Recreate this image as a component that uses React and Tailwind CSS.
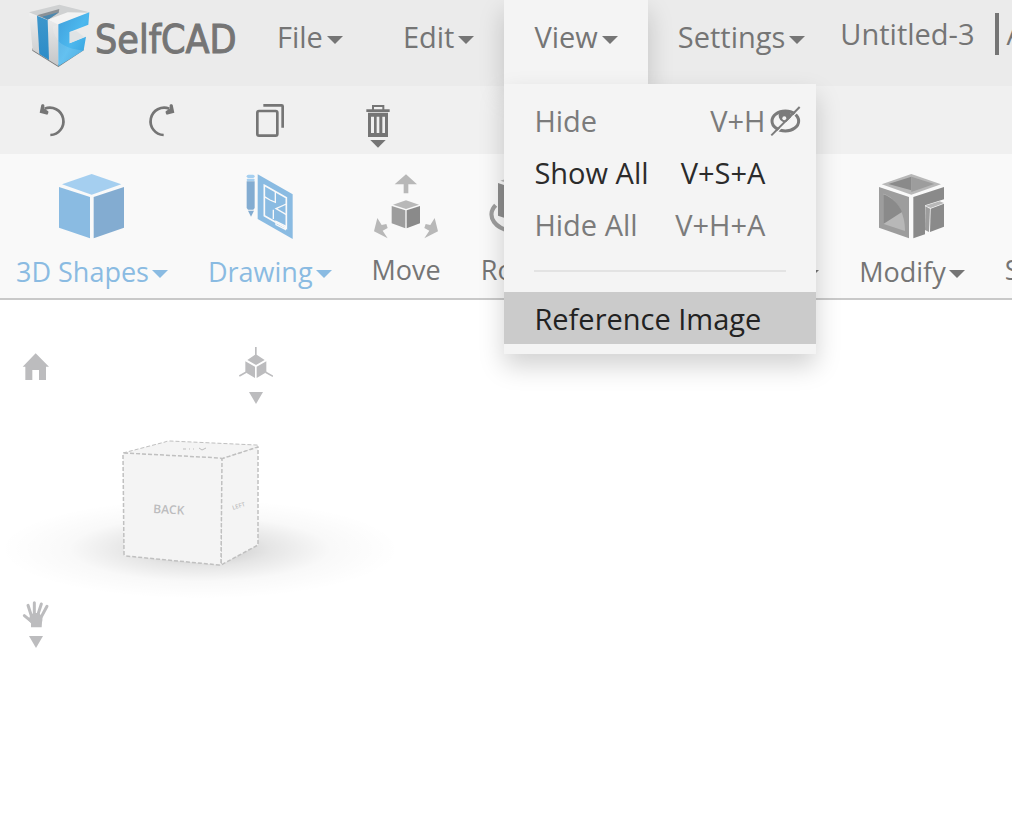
import { useState } from "react";

const ribbonItems = [
  { name: "3D Shapes", icon: ShapesIcon, caret: true, active: true },
  { name: "Drawing", icon: DrawingIcon, caret: true, active: true },
  { name: "Move", icon: MoveIcon },
  { name: "Rotate", icon: RotateIcon },
  { name: "Scale", icon: SolidIcon },
  { name: "Render", icon: SolidIcon, caret: true },
  { name: "Modify", icon: ModifyIcon, caret: true },
  { name: "Simulation", icon: SolidIcon },
];

const viewItems = [
  { name: "Hide", keys: "V+H", disabled: true, icon: true },
  { name: "Show All", keys: "V+S+A" },
  { name: "Hide All", keys: "V+H+A", disabled: true },
];

function Caret() {
  return (
    <svg viewBox="0 0 16 8" className="w-4 h-2 shrink-0" fill="currentColor">
      <path d="M0 0h16L8 8z" />
    </svg>
  );
}

function LogoIcon() {
  return (
    <svg viewBox="84 12 186 192" className="w-[62px] h-16 shrink-0">
      <defs>
        <linearGradient id="blue" x1="0" y1="0" x2="1" y2="1">
          <stop offset="0" stopColor="#3f9fdb" />
          <stop offset="0.5" stopColor="#4db8ee" />
          <stop offset="1" stopColor="#2f9bd8" />
        </linearGradient>
        <linearGradient id="stripe" x1="0" y1="0" x2="0" y2="1">
          <stop offset="0" stopColor="#3f97cc" />
          <stop offset="1" stopColor="#2c8cc8" />
        </linearGradient>
        <linearGradient id="silver" x1="0" y1="0" x2="0" y2="1">
          <stop offset="0" stopColor="#f0f0f0" />
          <stop offset="1" stopColor="#c4c6c8" />
        </linearGradient>
      </defs>
      <path d="M97 152l78 49 76-50-2-6-74 48-78-48z" fill="#777" />
      <path d="M87 37l88 35v126l-77-48z" fill="url(#silver)" />
      <path d="M87 37l91-23 90 23-93 36z" fill="#cfd1d2" />
      <path d="M111 46l67-19-2 11-32 21z" fill="#8b9196" />
      <path d="M126 50l50-13-32 22z" fill="#4a88b0" />
      <path d="M143 59l60-22 65 1-93 36z" fill="#f3f3f3" />
      <path d="M111 47l32 13 4 120-29-18z" fill="url(#stripe)" />
      <path d="M175 73l93-36-3 37-56 22v34l49-20-7 41-76 48z" fill="url(#blue)" />
      <path d="M209 96l20-3 24 18-44 19z" fill="#dfe3e5" />
      <path d="M158 80c6 38 20 62 93 72l-76 46V73z" fill="#fff" opacity="0.13" />
    </svg>
  );
}

function ShapesIcon() {
  return (
    <svg viewBox="177 56 198 198" className="size-[66px]">
      <path d="M275 56l89 31-89 31-89-31z" fill="#a5cff0" />
      <path d="M177 95l93 30v124l-93-32z" fill="#8abbe2" />
      <path d="M281 125l91-30v122l-91 32z" fill="#83acd1" />
    </svg>
  );
}

function DrawingIcon() {
  return (
    <svg viewBox="709 56 198 198" className="size-[66px]">
      <path d="M738 78h24v80l-4 5h-16l-4-5z" fill="#83acd1" />
      <path d="M742 166h18l-9 18z" fill="#83acd1" />
      <rect x="738" y="58" width="24" height="10" rx="5" fill="#a5cff0" />
      <rect x="738" y="70" width="24" height="7" rx="3" fill="#a5cff0" />
      <path d="M771 57l105 60v134l-105-60z" fill="#8abbe2" />
      <g fill="none" stroke="#f9f9f9" strokeWidth="5">
        <path d="M791 90l66 37v92l-66-38z" />
        <path d="M791 124l17 10 16 7v-32M857 178l-31-18 31-14M818 163v28M826 198v10l28 14v-10z" strokeWidth="4" />
      </g>
    </svg>
  );
}

function MoveIcon() {
  return (
    <svg viewBox="97 56 198 198" className="size-[66px]">
      <g fill="#b8b8b8">
        <path d="M196 57l33 30h-26v27h-14V87h-27z" />
        <path d="M196 135l39 13-39 13-39-13z" />
        <path d="M110 188l13 21 14-3 4 12-15 8 15 23-41-21z" />
        <path d="M282 188l-13 21-14-3-4 12 15 8-15 23 41-21z" />
      </g>
      <path d="M153 152l41 13v54l-41-15z" fill="#9d9d9d" />
      <path d="M198 165l40-13v52l-40 15z" fill="#8a8a8a" />
    </svg>
  );
}

function RotateIcon() {
  return (
    <svg viewBox="444 56 198 198" className="size-[66px]">
      <path d="M540 56l62 20-62 20-62-20z" fill="#b8b8b8" />
      <path d="M471 83l66 22v98l-66-22z" fill="#8d8d8d" />
      <path d="M544 105l64-22v98l-64 22z" fill="#7d7d7d" />
      <path d="M464 150c-28 28-10 78 76 80 60 0 96-24 92-50" fill="none" stroke="#9d9d9d" strokeWidth="13" />
    </svg>
  );
}

function SolidIcon() {
  return (
    <svg viewBox="177 56 198 198" className="size-[66px]">
      <path d="M275 56l89 31-89 31-89-31z" fill="#b8b8b8" />
      <path d="M177 95l93 30v124l-93-32z" fill="#9d9d9d" />
      <path d="M281 125l91-30v122l-91 32z" fill="#8a8a8a" />
    </svg>
  );
}

function ModifyIcon() {
  return (
    <svg viewBox="243 56 198 198" className="size-[66px]">
      <path d="M340 56l89 31-89 31-89-31z" fill="#b8b8b8" />
      <path d="M340 64v41l-69-19z" fill="#8a8a8a" />
      <path d="M340 64l69 22-69 24z" fill="#9d9d9d" />
      <path d="M243 95l90 30v124l-90-32z" fill="#9d9d9d" />
      <path d="M255 115c40 12 66 56 66 112l-66-22z" fill="#b8b8b8" />
      <path d="M256 117c26 9 46 29 56 53l-56 36z" fill="#8a8a8a" />
      <path d="M346 125l92-30v37l-57 18v87l-35 12z" fill="#8a8a8a" />
      <path d="M382 151l43-13 13 5-40 15z" fill="#b8b8b8" />
      <path d="M382 153l14 7-3 70-12-6z" fill="#9d9d9d" />
      <path d="M398 160l40-15v69l-42 16z" fill="#8a8a8a" />
    </svg>
  );
}

function HiddenEyeIcon() {
  return (
    <svg viewBox="810 80 93 93" className="size-[31px]" fill="none" stroke="currentColor">
      <ellipse cx="856" cy="125" rx="40" ry="30" strokeWidth="9" />
      <path d="M840 98a19 19 0 1 0 34 14c0-6-2-11-6-15z" fill="currentColor" stroke="none" />
      <circle cx="853" cy="117" r="6" fill="#f4f4f4" stroke="none" />
      <path d="M902 88l-85 84" stroke="#f4f4f4" strokeWidth="4" />
      <path d="M899 83l-85 85" strokeWidth="6" />
    </svg>
  );
}

function UndoIcon() {
  return (
    <svg viewBox="117 55 84 102" className="w-7 h-[34px]" fill="none" stroke="currentColor">
      <path d="M151 151a41 41 0 1 0-17-79" strokeWidth="8" />
      <path d="M119 84l5-24 5-2 4 3v11l12 8v5l-3 5z" fill="currentColor" stroke="none" />
    </svg>
  );
}

function TrashIcon() {
  return (
    <svg viewBox="1098 57 72 132" className="w-6 h-11" fill="currentColor">
      <path d="M1116 60h37v13h16v8h-70v-8h17zm6 6v7h25v-7z" fillRule="evenodd" />
      <path d="M1104 83h60v73h-60zm9 12v49h9V95zm17 0v49h8V95zm17 0v49h8V95z" fillRule="evenodd" />
      <path d="M1111 165h46l-23 23z" />
    </svg>
  );
}

function ViewCube() {
  return (
    <svg viewBox="0 400 400 200" className="w-[400px] h-[200px]">
      <defs>
        <radialGradient id="floor">
          <stop offset="0" stopColor="#000" stopOpacity="0.24" />
          <stop offset="0.35" stopColor="#000" stopOpacity="0.1" />
          <stop offset="0.65" stopColor="#000" stopOpacity="0.025" />
          <stop offset="1" stopColor="#000" stopOpacity="0" />
        </radialGradient>
      </defs>
      <ellipse cx="200" cy="549" rx="200" ry="50" fill="url(#floor)" />
      <g fill="#f4f4f4" stroke="#c0c0c0" strokeWidth="1.5" strokeDasharray="4 2" strokeLinejoin="round">
        <path d="M123 453l42-11q2-1 5-1l86 4q3 0 2 2l-37 12z" strokeWidth="1" />
        <path d="M221 459l37-12v98l-37 20z" />
        <path d="M124 453l96 5q2 0 2 2l-1 103q0 2-2 2l-93-9q-2 0-2-2l-1-99z" />
      </g>
      <path d="M183 449h3m3 0h1m3 0h1m5-1l3 2 4-2" fill="none" stroke="#bdbdbd" />
      <g fill="#bcbcbe" className="font-['Open_Sans',sans-serif] font-semibold">
        <text x="153" y="513" fontSize="12" transform="rotate(3 153 513)">BACK</text>
        <text x="233" y="510" fontSize="6" transform="rotate(-18 233 510)">LEFT</text>
      </g>
    </svg>
  );
}

function DownTriangle() {
  return (
    <svg viewBox="0 0 14 12" className="w-3.5 h-3" fill="currentColor">
      <path d="M0 0h14L7 12z" />
    </svg>
  );
}

export default function App() {
  const [open, setOpen] = useState("View");

  return (
    <div className="min-h-screen overflow-x-hidden bg-white text-[#757575] font-['Open_Sans',sans-serif] whitespace-nowrap">
      <header className="flex h-[86px] bg-[#ebebeb] text-[29px]">
        <a href="#" className="flex w-[247px] shrink-0 gap-[5px] pl-7 pt-1">
          <LogoIcon />
          <span className="pt-2 text-[39px] leading-[56px] [-webkit-text-stroke:1px_#757575] font-['DejaVu_Sans_Condensed','Open_Sans',sans-serif]">SelfCAD</span>
        </a>
        <nav className="flex h-[84px]">
          {["File", "Edit", "View", "Settings"].map((name) => (
            <div key={name} className={open === name ? "relative z-10 bg-[#f4f4f4] shadow-[0_12px_24px_rgba(0,0,0,0.18)]" : ""}>
              <button
                onClick={() => setOpen(open === name ? "" : name)}
                className="flex h-full items-center gap-1 px-[30px] pb-2.5"
              >
                {name}
                <span className="pt-1.5"><Caret /></span>
              </button>
              {open === name && name === "View" && (
                <div className="absolute left-0 top-full w-[312px] bg-[#f4f4f4] py-2.5 shadow-[0_12px_24px_rgba(0,0,0,0.18)]">
                  {viewItems.map((item) => (
                    <button
                      key={item.name}
                      disabled={item.disabled}
                      className="flex h-[52px] w-full items-center pl-[30px] pr-[15px] pt-0.5 text-[#2b2b2b] disabled:text-[#7b7b7b]"
                    >
                      {item.name}
                      <span className="ml-auto">{item.keys}</span>
                      <span className="flex w-9 justify-end">{item.icon && <HiddenEyeIcon />}</span>
                    </button>
                  ))}
                  <hr className="mx-[30px] my-5 border-t-2 border-[#e3e3e3]" />
                  <button className="flex h-[52px] w-full items-center bg-[#cbcbcb] pl-[30px] pt-0.5 text-[#222]">
                    Reference Image
                  </button>
                </div>
              )}
            </div>
          ))}
        </nav>
        <div className="flex h-[84px] items-center pb-4 pl-[5px]">
          <span className="pr-5">Untitled-3</span>
          <span className="h-[42px] w-1 bg-[#757575]" />
          <a href="#" className="pl-2">Account</a>
        </div>
      </header>

      <div className="flex h-[68px] bg-[#f0f0f0]">
        <button aria-label="Undo" className="flex w-[108px] items-center justify-center pr-0.5">
          <UndoIcon />
        </button>
        <button aria-label="Redo" className="flex w-[108px] items-center justify-center pr-0.5">
          <span className="-scale-x-100"><UndoIcon /></span>
        </button>
        <button aria-label="Copy" className="flex w-[108px] items-center justify-center">
          <svg viewBox="768 55 84 102" className="w-7 h-[34px]" fill="none" stroke="currentColor" strokeWidth="8">
            <rect x="772" y="79" width="60" height="74" rx="5" />
            <path d="M790 62h55q3 0 3 3v64" />
          </svg>
        </button>
        <button aria-label="Delete" className="flex w-[108px] justify-center pt-[18px]">
          <TrashIcon />
        </button>
      </div>

      <div className="flex h-[146px] border-b-2 border-[#c9c9c9] bg-[#f9f9f9] pt-5 text-[27px]">
        {ribbonItems.map(({ name, icon: Icon, caret, active }) => (
          <button
            key={name}
            className={`flex shrink-0 flex-col items-center px-5 first:pl-4 ${active ? "text-[#8abbe2]" : ""}`}
          >
            <Icon />
            <span className={`flex items-center gap-[3px] leading-10 ${caret ? "pt-3" : "pt-2.5"}`}>
              {name}
              {caret && <span className="pt-1"><Caret /></span>}
            </span>
          </button>
        ))}
      </div>

      <main className="w-[400px] pt-[46px] text-[#bcbcbe]">
        <div className="flex items-start justify-between pl-[22px] pr-[127px]">
          <button aria-label="Home" className="pt-[7px]">
            <svg viewBox="66 69 84 84" className="size-7" fill="currentColor">
              <path d="M107 70l40 40h-9v40h-21v-30H97v30H76v-40h-8z" />
            </svg>
          </button>
          <button aria-label="Axes" className="flex flex-col items-center gap-[13px]">
            <svg viewBox="716 48 102 99" className="w-[34px] h-[33px]" fill="currentColor">
              <path d="M764 51h5v23l24 16-26 15-26-15 23-16zM735 94l29 16v34l-29-17zM798 94l-29 16v34l29-17z" />
              <path d="M737 127l-20 11M796 127l22 12" stroke="currentColor" strokeWidth="5" />
            </svg>
            <DownTriangle />
          </button>
        </div>
        <div className="-mt-1">
          <ViewCube />
        </div>
        <button aria-label="Pan" className="ml-[22px] flex flex-col items-center gap-2">
          <svg viewBox="66 32 84 84" className="size-7">
            <g stroke="currentColor" strokeWidth="9" strokeLinecap="round">
              <path d="M95 82l-11-34M103 78V40M113 78l11-34M122 86l19-35M94 96L73 79" />
            </g>
            <path d="M90 80l10-9h17l10 12q1 8-1 16l-1 15H93V102l-8-10z" fill="currentColor" />
          </svg>
          <DownTriangle />
        </button>
      </main>
    </div>
  );
}
